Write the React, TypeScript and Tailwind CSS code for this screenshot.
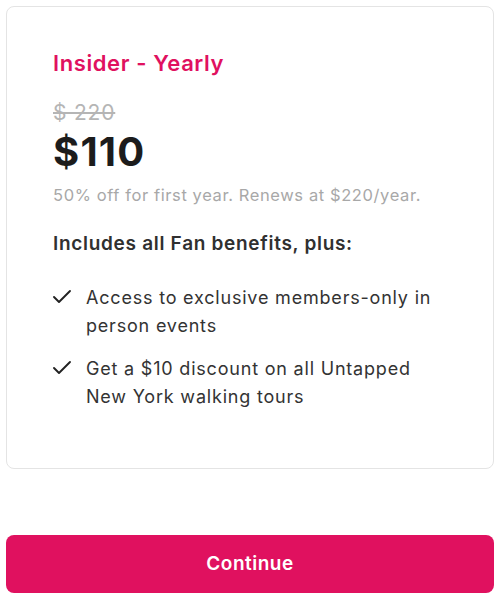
import { Check } from "lucide-react";

const benefits = [
    "Access to exclusive members-only in person events",
    "Get a $10 discount on all Untapped New York walking tours",
];

const App = () => {
    return (
        <div className="w-[500px] h-[600px] bg-white px-[6px] pt-[6px] font-['Inter',sans-serif]">
            <div className="h-[463px] rounded-[8px] border border-[#e4e4e4] pl-[46px] pr-[40px] pt-[41px]">
                <h2 className="text-[22px] font-semibold leading-[30px] tracking-[0.6px] text-[#e0115f]">Insider - Yearly</h2>

                <div className="mt-[21px] text-[21px] leading-[28px] tracking-[0.8px] text-[#b5b5b5] line-through">$ 220</div>
                <div className="mt-[2px] text-[40px] font-bold leading-[46px] tracking-[1.2px] text-[#1c1c1c]">$110</div>
                <p className="mt-[9px] text-[16.5px] leading-[22px] tracking-[0.6px] text-[#a8a8a8]">
                    50% off for first year. Renews at $220/year.
                </p>

                <h3 className="mt-[25px] text-[19px] font-semibold leading-[26px] tracking-[0.7px] text-[#303030]">
                    Includes all Fan benefits, plus:
                </h3>

                <ul className="mt-[27px] flex flex-col gap-[15px]">
                    {benefits.map((b) => (
                        <li key={b} className="flex items-start gap-[12px]">
                            <Check className="-ml-[3px] mt-[1px] h-[24px] w-[24px] shrink-0 text-[#222]" strokeWidth={1.9} />
                            <span className="text-[18px] leading-[28px] tracking-[0.8px] text-[#333]">{b}</span>
                        </li>
                    ))}
                </ul>
            </div>

            <button className="mt-[66px] flex h-[58px] w-[488px] items-center justify-center rounded-[8px] bg-[#e0115f] text-[19px] font-semibold tracking-[0.5px] text-white">
                Continue
            </button>
        </div>
    );
};

export default App;
